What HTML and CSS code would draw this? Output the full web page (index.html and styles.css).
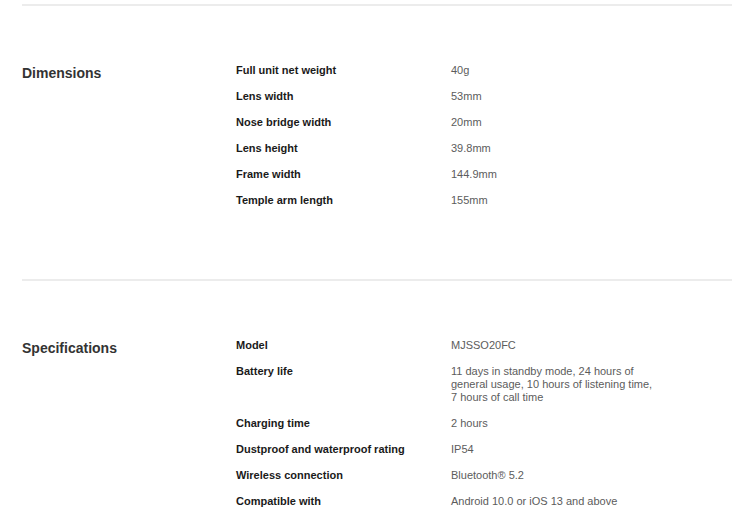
FILE: index.html
```html
<!DOCTYPE html>
<html lang="en">
<head>
<meta charset="utf-8">
<title>Specs</title>
<link rel="stylesheet" href="styles.css">
</head>
<body>
<div class="page">
  <section class="section">
    <h2 class="title">Dimensions</h2>
    <dl class="list">
      <div class="row"><dt>Full unit net weight</dt><dd>40g</dd></div>
      <div class="row"><dt>Lens width</dt><dd>53mm</dd></div>
      <div class="row"><dt>Nose bridge width</dt><dd>20mm</dd></div>
      <div class="row"><dt>Lens height</dt><dd>39.8mm</dd></div>
      <div class="row"><dt>Frame width</dt><dd>144.9mm</dd></div>
      <div class="row"><dt>Temple arm length</dt><dd>155mm</dd></div>
    </dl>
  </section>
  <section class="section">
    <h2 class="title">Specifications</h2>
    <dl class="list">
      <div class="row"><dt>Model</dt><dd>MJSSO20FC</dd></div>
      <div class="row"><dt>Battery life</dt><dd>11 days in standby mode, 24 hours of general usage, 10 hours of listening time, 7 hours of call time</dd></div>
      <div class="row"><dt>Charging time</dt><dd>2 hours</dd></div>
      <div class="row"><dt>Dustproof and waterproof rating</dt><dd>IP54</dd></div>
      <div class="row"><dt>Wireless connection</dt><dd>Bluetooth® 5.2</dd></div>
      <div class="row"><dt>Compatible with</dt><dd>Android 10.0 or iOS 13 and above</dd></div>
    </dl>
  </section>
</div>
</body>
</html>
```
FILE: styles.css
```css
html, body {
  margin: 0;
  padding: 0;
  background: #fff;
}
body {
  font-family: "Liberation Sans", Arial, sans-serif;
  color: #1a1a1a;
}
.page {
  width: 710px;
  margin-left: 22px;
  padding-top: 4px;
}
.section {
  display: flex;
  border-top: 2px solid #ececec;
  padding: 58px 0 72px;
}
.title {
  width: 214px;
  flex: none;
  margin: 1px 0 0;
  font-size: 14px;
  line-height: 16px;
  font-weight: 700;
  color: #333;
}
.list {
  margin: 0;
  display: flex;
  flex-direction: column;
  gap: 13px;
}
.row {
  display: flex;
}
.row dt {
  width: 215px;
  flex: none;
  font-size: 11px;
  line-height: 13px;
  font-weight: 700;
  color: #1a1a1a;
}
.row dd {
  margin: 0;
  width: 210px;
  font-size: 11px;
  line-height: 13px;
  color: #5c5c5c;
}
```
